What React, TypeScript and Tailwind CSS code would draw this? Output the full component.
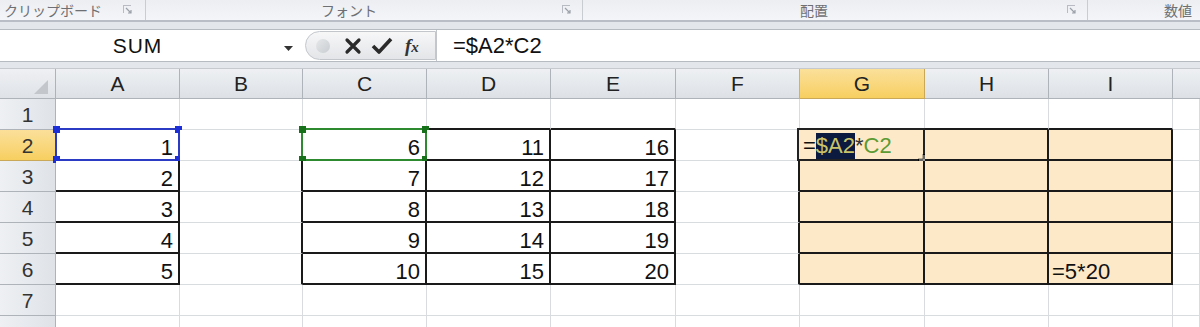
import React from 'react'

const COLS = ['A', 'B', 'C', 'D', 'E', 'F', 'G', 'H', 'I', '']
const ROWS = [1, 2, 3, 4, 5, 6, 7, 8]

const data: Record<string, string> = {
  A2: '1', A3: '2', A4: '3', A5: '4', A6: '5',
  C2: '6', C3: '7', C4: '8', C5: '9', C6: '10',
  D2: '11', D3: '12', D4: '13', D5: '14', D6: '15',
  E2: '16', E3: '17', E4: '18', E5: '19', E6: '20',
}

// bordered ranges: [colStart, colEnd, rowStart, rowEnd]
const ranges: Array<[number, number, number, number]> = [
  [0, 0, 2, 6],
  [2, 4, 2, 6],
  [6, 8, 2, 6],
]

function inRange(c: number, r: number) {
  return ranges.some(([c0, c1, r0, r1]) => c >= c0 && c <= c1 && r >= r0 && r <= r1)
}

function Launcher() {
  return (
    <svg width="11" height="11" viewBox="0 0 11 11" className="shrink-0">
      <path d="M1 1h8v1H2v7H1z" fill="#b8bcc2" />
      <path d="M4 4l5 5M9 6v3H6" stroke="#9aa0a8" strokeWidth="1.2" fill="none" />
    </svg>
  )
}

function Handle({ pos, color }: { pos: string; color: string }) {
  return <div className={`absolute w-[7px] h-[7px] ${pos} ${color}`} />
}

function Cell({ c, r }: { c: number; r: number }) {
  const id = `${COLS[c]}${r}`
  const inside = inRange(c, r)
  const rightBlack = inside || inRange(c + 1, r)
  const bottomBlack = inside || inRange(c, r + 1)
  const fill = c >= 6 && c <= 8 && r >= 2 && r <= 6 ? 'bg-[#fde9c8]' : 'bg-white'
  const rb = rightBlack ? 'border-r-2 border-r-[#1a1a1a]' : 'border-r border-r-[#d9dcdf]'
  const bb = bottomBlack ? 'border-b-2 border-b-[#1a1a1a]' : 'border-b border-b-[#d9dcdf]'

  return (
    <div className={`relative flex items-end justify-end pr-[5px] text-[22px] leading-[22px] text-[#111] ${fill} ${rb} ${bb}`}>
      {data[id]}
      {id === 'A2' && (
        <div className="absolute left-[-1px] top-[-2px] right-[-2px] bottom-[-2px] border-2 border-[#2b3bc4]">
          <Handle pos="-left-[4px] -top-[4px]" color="bg-[#1d2fd6]" />
          <Handle pos="-right-[4px] -top-[4px]" color="bg-[#1d2fd6]" />
          <Handle pos="-left-[4px] -bottom-[4px]" color="bg-[#1d2fd6]" />
          <Handle pos="-right-[4px] -bottom-[4px]" color="bg-[#1d2fd6]" />
        </div>
      )}
      {id === 'C2' && (
        <div className="absolute left-[-2px] top-[-2px] right-[-2px] bottom-[-2px] border-2 border-[#2e8a2e]">
          <Handle pos="-left-[4px] -top-[4px]" color="bg-[#17701a]" />
          <Handle pos="-right-[4px] -top-[4px]" color="bg-[#17701a]" />
          <Handle pos="-left-[4px] -bottom-[4px]" color="bg-[#17701a]" />
          <Handle pos="-right-[4px] -bottom-[4px]" color="bg-[#17701a]" />
        </div>
      )}
      {id === 'G2' && (
        <div className="absolute left-[-3px] top-[-2px] right-[-2px] bottom-[-2px] border-2 border-[#222] bg-[#fde9c8] flex items-center pl-[4px] pt-[3px] text-[22px] leading-[26px]">
          <span className="text-[#111]">=</span>
          <span className="bg-[#0b1a3e] text-[#c9c46a]">$A2</span>
          <span className="text-[#333]">*</span>
          <span className="text-[#5c9a34]">C2</span>
          <svg width="12" height="12" viewBox="0 0 12 12" className="absolute -right-[7px] -bottom-[7px]">
            <path d="M6 0v12M0 6h12" stroke="#000" strokeWidth="2.5" />
            <path d="M6 1v10M1 6h10" stroke="#fff" strokeWidth="0.8" />
          </svg>
        </div>
      )}
      {id === 'I6' && (
        <span className="absolute left-[3px] bottom-0 text-[#111]">=5*20</span>
      )}
    </div>
  )
}

export default function App() {
  return (
    <div className="w-[1200px] h-[327px] overflow-hidden bg-white font-['Liberation_Sans',sans-serif]">
      {/* ribbon group labels */}
      <div className="flex h-[22px] bg-gradient-to-b from-[#eceef2] to-[#f4f5f8] border-b-2 border-b-[#b9bec6] text-[14px] leading-[20px] text-[#6d6f73] font-['Noto_Sans_CJK_JP',sans-serif] whitespace-nowrap">
        <div className="w-[146px] flex items-start justify-between pl-[4px] pr-[12px] border-r border-r-[#c9cdd2]">
          <span>クリップボード</span>
          <div className="pt-[4px]"><Launcher /></div>
        </div>
        <div className="w-[437px] flex items-start pr-[10px] border-r border-r-[#c9cdd2]">
          <span className="ml-[175px]">フォント</span>
          <div className="ml-auto pt-[4px]"><Launcher /></div>
        </div>
        <div className="w-[505px] flex items-start pr-[10px] border-r border-r-[#c9cdd2]">
          <span className="ml-[217px]">配置</span>
          <div className="ml-auto pt-[4px]"><Launcher /></div>
        </div>
        <div className="flex-1 flex items-start">
          <span className="ml-[76px]">数値</span>
        </div>
      </div>
      <div className="h-[7px] bg-[#e3e6ea]" />

      {/* formula bar */}
      <div className="flex h-[33px] bg-white border-y border-y-[#b6bbc2]">
        <div className="w-[305px] relative flex items-center justify-center text-[21px] tracking-[1px] text-[#111]">
          <span className="-ml-[30px]">SUM</span>
          <svg width="9" height="5" viewBox="0 0 9 5" className="absolute left-[284px] top-[16px]">
            <path d="M0 0h9L4.5 5z" fill="#333" />
          </svg>
        </div>
        <div className="w-[131px] flex items-center rounded-l-full border border-[#c3c7cc] bg-gradient-to-b from-[#f7f7f8] to-[#e3e5e8] my-[1px]">
          <div className="ml-[10px] w-[14px] h-[14px] rounded-full bg-gradient-to-br from-[#e6e8ea] to-[#c9cdd1]" />
          <svg width="18" height="18" viewBox="0 0 18 18" className="ml-[14px]">
            <path d="M3 3l12 12M15 3L3 15" stroke="#2a2a2a" strokeWidth="3.2" strokeLinecap="round" />
          </svg>
          <svg width="22" height="18" viewBox="0 0 22 18" className="ml-[9px]">
            <path d="M2 9l6 6L20 2" stroke="#2a2a2a" strokeWidth="3.6" fill="none" strokeLinejoin="round" />
          </svg>
          <span className="ml-[12px] text-[19px] font-bold italic text-[#333] font-['Liberation_Serif',serif] leading-none">
            f<span className="text-[15px]">x</span>
          </span>
        </div>
        <div className="flex-1 flex items-center pl-[16px] text-[22px] text-[#111] border-l border-l-[#c3c7cc]">
          =$A2*C2
        </div>
      </div>
      <div className="h-[7px] bg-[#e3e6ea] border-b border-b-[#c6cacf]" />

      {/* sheet grid */}
      <div className="grid grid-cols-[56px_124px_123px_124px_124px_125px_124px_125px_124px_124px_1fr] grid-rows-[30px_31px_31px_31px_31px_31px_31px_31px_31px]">
        <div className="relative bg-gradient-to-b from-[#eef0f3] to-[#dfe3e8] border-r border-b border-[#aeb3b9]">
          <svg width="14" height="14" viewBox="0 0 14 14" className="absolute right-[7px] bottom-[4px]">
            <path d="M14 0v14H0z" fill="#c3c7cc" />
          </svg>
        </div>
        {COLS.map((col, c) => (
          <div
            key={col || 'J'}
            className={`flex items-center justify-center text-[21px] text-[#222] border-r border-b ${
              col === 'G'
                ? 'bg-gradient-to-b from-[#fbe09a] to-[#f7cf5f] border-[#c9a85a]'
                : 'bg-gradient-to-b from-[#eef0f3] to-[#dde1e6] border-[#aeb3b9]'
            } ${c === 9 ? 'border-r-0' : ''}`}
          >
            {col}
          </div>
        ))}
        {ROWS.map(r => (
          <React.Fragment key={r}>
            <div
              className={`flex items-center justify-center pt-[2px] text-[21px] text-[#333] border-r border-b ${
                r === 2
                  ? 'bg-gradient-to-b from-[#fbe09a] to-[#f7cf5f] border-[#c9a85a]'
                  : 'bg-gradient-to-r from-[#eef0f3] to-[#dfe3e8] border-[#aeb3b9]'
              }`}
            >
              {r < 8 ? r : ''}
            </div>
            {COLS.map((_, c) => (
              <Cell key={c} c={c} r={r} />
            ))}
          </React.Fragment>
        ))}
      </div>
    </div>
  )
}
